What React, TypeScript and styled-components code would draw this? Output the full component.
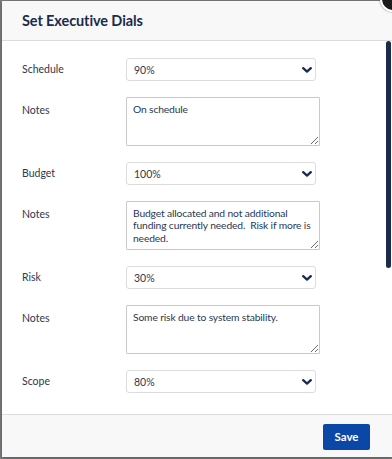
import React from 'react';
import styled, { createGlobalStyle } from 'styled-components';

const GlobalStyle = createGlobalStyle`
  html, body {
    margin: 0;
    padding: 0;
    background: #7b7c7e;
    overflow: hidden;
  }
  body {
    font-family: Lato, "Liberation Sans", sans-serif;
  }
`;

const Backdrop = styled.div`
  width: 392px;
  height: 459px;
  padding: 1px 0 2px 2px;
  box-sizing: border-box;
  position: relative;
  overflow: hidden;
`;

const Modal = styled.div`
  width: 390px;
  height: 456px;
  background: #fff;
  border-radius: 0 0 0 3px;
  display: flex;
  flex-direction: column;
  box-shadow: 0 1px 4px rgba(0, 0, 0, 0.3);
`;

const Header = styled.div`
  height: 39px;
  flex: none;
  background: #f8f8f8;
  border-bottom: 1px solid #dcdcdc;
  display: flex;
  align-items: center;
  padding: 0 20px;
`;

const Title = styled.h2`
  margin: 0;
  font-size: 14.5px;
  font-weight: 700;
  color: #1c2b4b;
  letter-spacing: -0.1px;
`;

const CloseButton = styled.button`
  position: absolute;
  top: -14px;
  right: -14px;
  width: 26px;
  height: 26px;
  border-radius: 50%;
  background: #1a1a1a;
  border: 2px solid #fff;
  box-shadow: 0 0 2px rgba(0, 0, 0, 0.5);
  padding: 0;
`;

const BodyFrame = styled.div`
  flex: 1;
  position: relative;
  min-height: 0;
`;

const Body = styled.div`
  height: 100%;
  box-sizing: border-box;
  overflow-y: auto;
  padding: 17px 20px 40px 20px;
  display: flex;
  flex-direction: column;
  gap: 16px;
  scrollbar-width: none;
  &::-webkit-scrollbar {
    display: none;
  }
`;

/* custom scroll thumb drawn over the body */
const ScrollThumb = styled.div`
  position: absolute;
  top: 0;
  right: 1px;
  width: 5px;
  height: 227px;
  border-radius: 3px;
  background: #1c2b4b;
`;

const Row = styled.div`
  display: grid;
  grid-template-columns: 104px auto;
  align-items: start;
`;

const Label = styled.label<{ $offset: number }>`
  font-size: 10.5px;
  line-height: 13px;
  color: #2c3850;
  padding-top: ${({ $offset }) => $offset}px;
`;

const SelectWrap = styled.div`
  position: relative;
  width: 190px;
`;

const Select = styled.select`
  appearance: none;
  display: block;
  width: 190px;
  height: 23px;
  box-sizing: border-box;
  border: 1px solid #dcdcdc;
  border-radius: 3px;
  background: #fff;
  padding: 0 20px 0 7px;
  font-family: Lato, "Liberation Sans", sans-serif;
  font-size: 10.5px;
  color: #2c3850;
  outline: none;
`;

const Chevron = styled.svg`
  position: absolute;
  right: 4px;
  top: 9px;
  pointer-events: none;
`;

const NotesArea = styled.textarea`
  display: block;
  width: 194px;
  height: 49px;
  box-sizing: border-box;
  border: 1px solid #c9c9c9;
  border-radius: 1px;
  padding: 5px 1px 5px 6px;
  font-family: Lato, "Liberation Sans", sans-serif;
  font-size: 10.3px;
  line-height: 12.3px;
  letter-spacing: -0.15px;
  color: #2c3850;
  resize: vertical;
  outline: none;
`;

const Footer = styled.div`
  height: 42px;
  flex: none;
  background: #f8f8f8;
  border-top: 1px solid #dedede;
  display: flex;
  align-items: center;
  justify-content: flex-end;
  padding: 0 22px;
`;

const SaveButton = styled.button`
  width: 47px;
  height: 26px;
  background: #0a47a6;
  color: #fff;
  border: none;
  border-radius: 2px;
  font-family: Lato, "Liberation Sans", sans-serif;
  font-size: 11.5px;
  font-weight: 700;
  margin-top: 1px;
`;

interface Dial {
  name: string;
  value: string;
  notes?: string;
}

const dials: Dial[] = [
  { name: 'Schedule', value: '90%', notes: 'On schedule' },
  {
    name: 'Budget',
    value: '100%',
    notes: 'Budget allocated and not additional funding currently needed.  Risk if more is needed.',
  },
  { name: 'Risk', value: '30%', notes: 'Some risk due to system stability.' },
  { name: 'Scope', value: '80%' },
];

const percentOptions = ['0%', '10%', '20%', '30%', '40%', '50%', '60%', '70%', '80%', '90%', '100%'];

const DialSelect: React.FC<{ value: string }> = ({ value }) => (
  <SelectWrap>
    <Select defaultValue={value}>
      {percentOptions.map((p) => (
        <option key={p} value={p}>{p}</option>
      ))}
    </Select>
    <Chevron width="10" height="6" viewBox="0 0 10 6">
      <path d="M1.2 1.2 L5 4.6 L8.8 1.2" stroke="#1c2b4b" strokeWidth="2.3" fill="none" strokeLinecap="round" strokeLinejoin="round" />
    </Chevron>
  </SelectWrap>
);

export default function App() {
  return (
    <>
      <GlobalStyle />
      <Backdrop>
        <Modal>
          <Header>
            <Title>Set Executive Dials</Title>
          </Header>
          <BodyFrame>
            <Body>
              {dials.map((d) => (
                <React.Fragment key={d.name}>
                  <Row>
                    <Label $offset={5}>{d.name}</Label>
                    <DialSelect value={d.value} />
                  </Row>
                  {d.notes !== undefined && (
                    <Row>
                      <Label $offset={7}>Notes</Label>
                      <NotesArea defaultValue={d.notes} />
                    </Row>
                  )}
                </React.Fragment>
              ))}
            </Body>
            <ScrollThumb />
          </BodyFrame>
          <Footer>
            <SaveButton>Save</SaveButton>
          </Footer>
        </Modal>
        <CloseButton aria-label="Close" />
      </Backdrop>
    </>
  );
}
